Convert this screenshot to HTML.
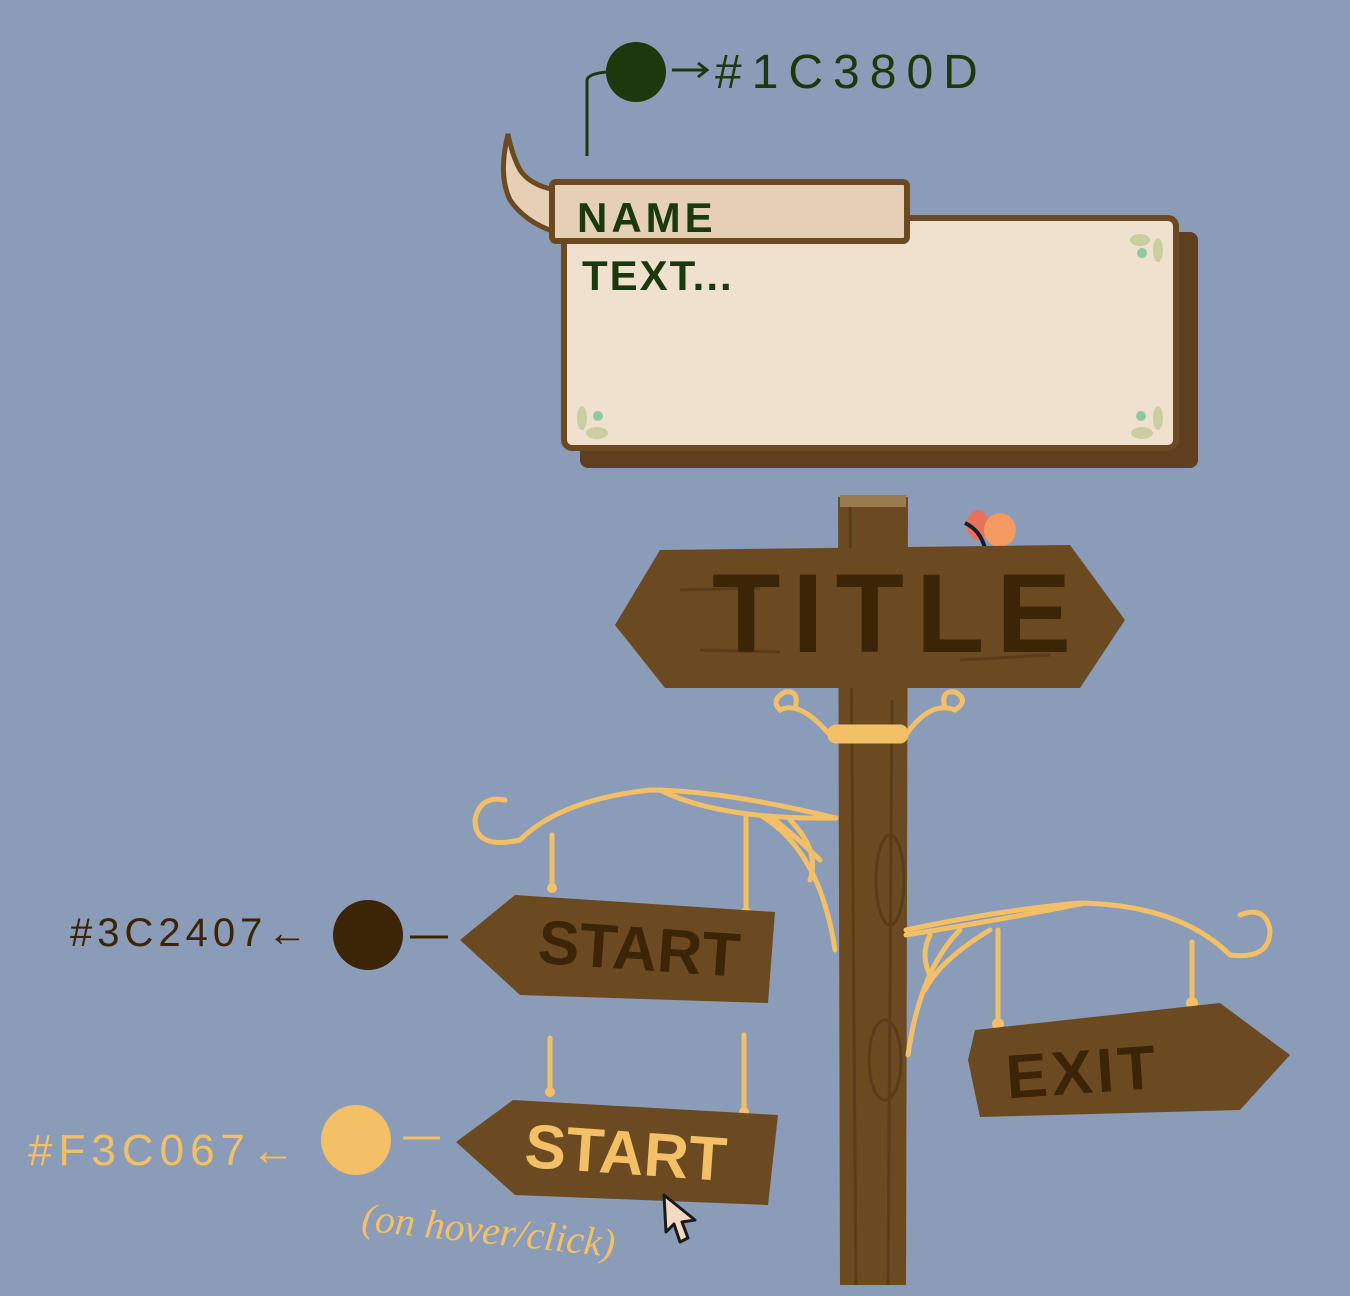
<!DOCTYPE html>
<html><head><meta charset="utf-8"><style>
html,body{margin:0;padding:0;background:#8A9CB7;}
svg{display:block}
.h{font-family:"Liberation Sans",sans-serif;font-weight:bold}
</style></head><body>
<svg width="1350" height="1296" viewBox="0 0 1350 1296" xmlns="http://www.w3.org/2000/svg">
<rect width="1350" height="1296" fill="#8A9CB7"/>
<path d="M587 156 L587 80 Q588 74 606 72" stroke="#1C380D" stroke-width="3" fill="none"/>
<circle cx="636" cy="72" r="30" fill="#1C380D"/>
<path d="M672 70 L706 70 M698 63 L707 70 L698 77" stroke="#1C380D" stroke-width="3" fill="none"/>
<text x="715" y="88" font-family="Liberation Sans,sans-serif" font-size="48" fill="#1C380D" letter-spacing="10">#1C380D</text>
<rect x="580" y="232" width="618" height="236" rx="8" fill="#5E4020"/>
<rect x="564" y="218" width="612" height="230" rx="8" fill="#F0E1CE" stroke="#6B4A22" stroke-width="6"/>
<path d="M508 134 Q498 175 510 200 Q525 222 555 232 L555 190 Q530 185 520 170 Q512 155 508 134Z" fill="#E5D0B5" stroke="#6B4A22" stroke-width="5"/>
<rect x="552" y="182" width="355" height="59" rx="4" fill="#E5D0B5" stroke="#6B4A22" stroke-width="6"/>
<text x="577" y="232" class="h" font-size="42" fill="#1C380D" letter-spacing="4">NAME</text>
<text x="582" y="290" class="h" font-size="42" fill="#1C380D" letter-spacing="2">TEXT...</text>
<g fill="#C9CFA0"><ellipse cx="1140" cy="240" rx="10" ry="6"/><ellipse cx="1158" cy="250" rx="5" ry="12"/><ellipse cx="582" cy="418" rx="5" ry="12"/><ellipse cx="597" cy="433" rx="11" ry="6"/><ellipse cx="1142" cy="433" rx="11" ry="6"/><ellipse cx="1158" cy="418" rx="5" ry="12"/></g>
<g fill="#8FC9A0"><circle cx="1142" cy="253" r="5"/><circle cx="598" cy="416" r="5"/><circle cx="1141" cy="416" r="5"/></g>
<path d="M838 497 L908 497 L906 1285 L840 1285 Z" fill="#6B4A22"/>
<path d="M850 497 L856 1285 M892 700 L888 1285" stroke="#5A3C1A" stroke-width="3"/>
<ellipse cx="885" cy="1060" rx="16" ry="40" fill="none" stroke="#5A3C1A" stroke-width="3"/>
<ellipse cx="890" cy="880" rx="14" ry="45" fill="none" stroke="#5A3C1A" stroke-width="3"/>
<rect x="840" y="495" width="66" height="12" fill="#9B7A50"/>
<ellipse cx="978" cy="525" rx="11" ry="15" fill="#E9705A"/>
<ellipse cx="1000" cy="530" rx="16" ry="17" fill="#F29A60"/>
<path d="M965 523 Q980 530 985 548" stroke="#1a1a2e" stroke-width="4" fill="none"/>
<path d="M660 550 L1070 545 L1125 620 L1080 688 L665 688 L615 625 Z" fill="#6B4A22"/>
<path d="M680 590 L760 588 M960 660 L1050 655 M700 650 L780 652" stroke="#5A3C1A" stroke-width="3"/>
<text x="712" y="652" class="h" font-size="112" fill="#3C2407" letter-spacing="12">TITLE</text>
<g stroke="#F3C067" stroke-width="5" fill="none" stroke-linecap="round">
<rect x="830" y="727" width="76" height="14" rx="6" fill="#F3C067"/>
<path d="M830 735 Q800 700 780 710 Q770 700 785 692 Q800 690 795 708"/>
<path d="M906 735 Q930 700 955 710 Q970 700 955 692 Q940 690 945 708"/>
<path d="M836 818 Q720 790 650 790 Q560 800 520 840 Q475 850 475 820 Q480 795 505 800"/>
<path d="M836 818 Q720 820 660 790"/>
<path d="M760 815 Q820 850 835 950 M790 820 Q820 850 810 880 M770 816 Q800 840 820 860"/>
<path d="M552 835 L552 888 M746 815 L746 910"/>
<path d="M906 930 Q1000 910 1080 903 Q1180 905 1230 955 Q1270 960 1270 930 Q1265 905 1240 915"/>
<path d="M906 935 Q1000 920 1085 903"/>
<path d="M960 930 Q920 970 908 1055 M930 935 Q920 955 930 975 M990 930 Q940 960 925 990"/>
<path d="M998 930 L998 1022 M1192 942 L1192 1002"/>
<path d="M550 1038 L550 1090 M744 1035 L744 1110"/>
</g>
<g fill="#F3C067"><circle cx="552" cy="888" r="5"/><circle cx="746" cy="912" r="5"/><circle cx="998" cy="1024" r="6"/><circle cx="1192" cy="1003" r="6"/><circle cx="550" cy="1092" r="5"/><circle cx="744" cy="1112" r="5"/></g>
<path d="M515 895 L775 912 L768 1003 L520 995 L460 940 Z" fill="#6B4A22"/>
<text x="538" y="970" class="h" font-size="62" fill="#3C2407" transform="rotate(4 640 950)">START</text>
<path d="M513 1100 L778 1115 L768 1205 L515 1195 L456 1142 Z" fill="#6B4A22"/>
<text x="525" y="1175" class="h" font-size="62" fill="#F3C067" transform="rotate(4 640 1150)">START</text>
<path d="M975 1030 L1220 1003 L1290 1055 L1240 1110 L980 1117 L968 1060 Z" fill="#6B4A22"/>
<text x="1005" y="1092" class="h" font-size="62" fill="#3C2407" letter-spacing="4" transform="rotate(-4 1100 1060)">EXIT</text>
<circle cx="368" cy="935" r="35" fill="#3C2407"/>
<path d="M410 937 L448 937" stroke="#3C2407" stroke-width="3"/>
<text x="70" y="946" font-family="Liberation Sans,sans-serif" font-size="40" fill="#3C2407" letter-spacing="5">#3C2407←</text>
<circle cx="356" cy="1140" r="35" fill="#F3C067"/>
<path d="M403 1138 L440 1138" stroke="#F3C067" stroke-width="3"/>
<text x="28" y="1165" font-family="Liberation Sans,sans-serif" font-size="44" fill="#F3C067" letter-spacing="6">#F3C067←</text>
<text x="360" y="1245" font-family="Liberation Serif,serif" font-style="italic" font-size="40" fill="#F3C067" transform="rotate(6 500 1245)">(on hover/click)</text>
<path d="M664 1195 L666 1232 L674 1224 L680 1242 L688 1238 L682 1222 L695 1220 Z" fill="#F6D9C2" stroke="#1a1a1a" stroke-width="3" stroke-linejoin="round"/>
</svg>
</body></html>
